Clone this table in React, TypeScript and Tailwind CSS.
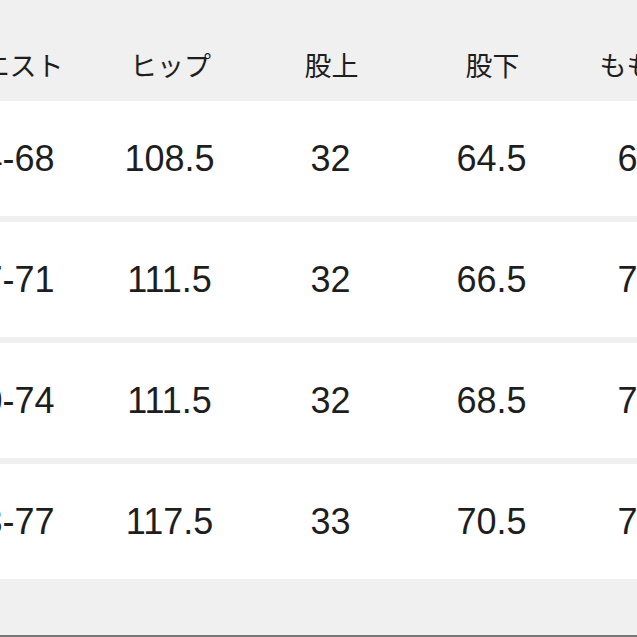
const headers = ['ウエスト', 'ヒップ', '股上', '股下', 'もも周り'];

const rows = [
  ['64-68', '108.5', '32', '64.5', '64.5'],
  ['67-71', '111.5', '32', '66.5', '70.5'],
  ['70-74', '111.5', '32', '68.5', '73.5'],
  ['73-77', '117.5', '33', '70.5', '76.5'],
];

export default function App() {
  return (
    <div
      className="w-[637px] h-[637px] overflow-hidden bg-[#f0f0f0] text-[#1e1e1e] flex flex-col"
      style={{ fontFamily: '"Noto Sans CJK JP", "Liberation Sans", sans-serif' }}
    >
      <div className="flex -ml-[72px] h-[101px] pt-[47px] shrink-0">
        {headers.map((h) => (
          <div key={h} className="w-[161px] shrink-0 text-center text-[27px] leading-[36px] pl-[2px]">
            {h}
          </div>
        ))}
      </div>
      <div className="flex flex-col gap-[6px]">
        {rows.map((r, i) => (
          <div key={i} className="flex -ml-[72px] h-[115px] bg-white items-center shrink-0">
            {r.map((v, j) => (
              <div
                key={j}
                className="w-[161px] shrink-0 text-center text-[36px] leading-none font-['Liberation_Sans',sans-serif]"
              >
                {v}
              </div>
            ))}
          </div>
        ))}
      </div>
      <div className="flex-1" />
      <div className="h-[2px] bg-[#777] shrink-0" />
    </div>
  );
}
